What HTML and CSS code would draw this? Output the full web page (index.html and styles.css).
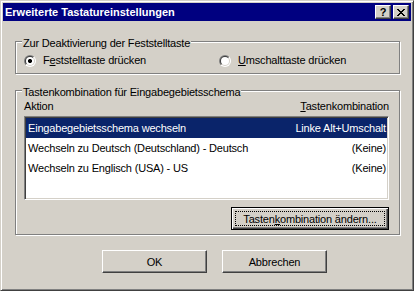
FILE: index.html
```html
<!DOCTYPE html>
<html lang="de">
<head>
    <meta charset="UTF-8">
    <meta name="viewport" content="width=device-width, initial-scale=1.0">
    <title>Erweiterte Tastatureinstellungen</title>
    <link rel="stylesheet" href="styles.css">
</head>
<body>
    <div class="window">
        <div class="titlebar">
            <span class="title">Erweiterte Tastatureinstellungen</span>
            <div class="caption-buttons">
                <button class="cap-btn help">?</button>
                <button class="cap-btn close">
                    <svg width="8" height="7" viewBox="0 0 8 7" shape-rendering="crispEdges">
                        <path fill="#000" d="M0 0h2v1H0z M6 0h2v1H6z M1 1h2v1H1z M5 1h2v1H5z M2 2h4v1H2z M3 3h2v1H3z M2 4h4v1H2z M1 5h2v1H1z M5 5h2v1H5z M0 6h2v1H0z M6 6h2v1H6z"/>
                    </svg>
                </button>
            </div>
        </div>

        <div class="dialog-body">
            <div class="group group-caps">
                <div class="group-title">Zur Deaktivierung der Feststelltaste</div>
                <div class="radio-row">
                    <label class="radio first">
                        <span class="radio-outer"><span class="radio-inner"><span class="radio-well checked"></span></span></span>
                        <span>F<u>e</u>ststelltaste drücken</span>
                    </label>
                    <label class="radio">
                        <span class="radio-outer"><span class="radio-inner"><span class="radio-well"></span></span></span>
                        <span><u>U</u>mschalttaste drücken</span>
                    </label>
                </div>
            </div>

            <div class="group group-keys">
                <div class="group-title">Tastenkombination für Eingabegebietsschema</div>
                <div class="list-header">
                    <span>Aktion</span>
                    <span><u>T</u>astenkombination</span>
                </div>
                <div class="listbox">
                    <div class="list-row selected">
                        <span>Eingabegebietsschema wechseln</span>
                        <span>Linke Alt+Umschalt</span>
                    </div>
                    <div class="list-row">
                        <span>Wechseln zu Deutsch (Deutschland) - Deutsch</span>
                        <span>(Keine)</span>
                    </div>
                    <div class="list-row">
                        <span>Wechseln zu Englisch (USA) - US</span>
                        <span>(Keine)</span>
                    </div>
                </div>
                <div class="group-actions">
                    <button class="btn btn-default">Tasten<u>k</u>ombination ändern...</button>
                </div>
            </div>

            <div class="dialog-buttons">
                <button class="btn">OK</button>
                <button class="btn">Abbrechen</button>
            </div>
        </div>
    </div>
</body>
</html>
```

FILE: styles.css
```css
*{
    box-sizing: border-box;
}
body{
    margin: 0;
    padding: 0;
    background: #d4d0c8;
    font-family: "Liberation Sans", Arial, sans-serif;
    font-size: 11px;
    line-height: 13px;
    letter-spacing: -0.18px;
    color: #000;
}
u{
    text-decoration: underline;
    text-underline-offset: 1px;
}

.window{
    width: 414px;
    height: 291px;
    background: #d4d0c8;
    border: 1px solid;
    border-color: #d4d0c8 #404040 #404040 #d4d0c8;
    box-shadow: inset 1px 1px #fff, inset -1px -1px #808080;
    padding: 2px;
}

.titlebar{
    display: flex;
    align-items: center;
    height: 18px;
    background: #000080;
    padding: 0 2px;
}
.title{
    color: #fff;
    font-weight: bold;
    letter-spacing: 0;
}
.caption-buttons{
    display: flex;
    gap: 2px;
    margin-left: auto;
}
.cap-btn{
    width: 16px;
    height: 14px;
    padding: 0;
    background: #d4d0c8;
    border: 1px solid;
    border-color: #fff #404040 #404040 #fff;
    box-shadow: inset -1px -1px #808080;
    display: flex;
    align-items: center;
    justify-content: center;
    font-family: "Liberation Sans", Arial, sans-serif;
    font-weight: bold;
    font-size: 11px;
    line-height: 12px;
}
.cap-btn svg{
    display: block;
}

.dialog-body{
    padding: 20px 11px 0 12px;
}

.group{
    border: 1px solid #808080;
    box-shadow: inset 1px 1px #fff, 1px 1px #fff;
    padding: 0 10px 0 8px;
}
.group-title{
    display: table;
    background: #d4d0c8;
    margin: -5px 0 0 -2px;
    padding: 0 1px;
}
.group-caps{
    padding-bottom: 6px;
}
.group-keys{
    margin-top: 16px;
    padding-bottom: 4px;
}

.radio-row{
    display: flex;
    margin-top: 4px;
}
.radio{
    display: flex;
    align-items: center;
    gap: 7px;
}
.radio.first{
    width: 195px;
}
.radio-outer{
    width: 12px;
    height: 12px;
    border-radius: 50%;
    padding: 1px;
    background: linear-gradient(135deg, #808080 50%, #fff 50%);
}
.radio-inner{
    display: block;
    width: 10px;
    height: 10px;
    border-radius: 50%;
    padding: 1px;
    background: linear-gradient(135deg, #404040 50%, #d4d0c8 50%);
}
.radio-well{
    display: block;
    width: 8px;
    height: 8px;
    border-radius: 50%;
    background: #fff;
}
.radio-well.checked{
    background: radial-gradient(circle, #000 1.8px, #fff 2.3px);
}

.list-header{
    display: flex;
    justify-content: space-between;
    margin-top: 1px;
}
.listbox{
    margin-top: 3px;
    height: 84px;
    background: #fff;
    border: 1px solid;
    border-color: #808080 #fff #fff #808080;
    box-shadow: inset 1px 1px #404040, inset -1px -1px #d4d0c8;
    padding: 1px;
}
.list-row{
    display: flex;
    justify-content: space-between;
    height: 20px;
    line-height: 20px;
    padding: 0 1px 0 2px;
}
.list-row.selected{
    background: #0a246a;
    color: #fff;
}

.group-actions{
    display: flex;
    justify-content: flex-end;
    margin-top: 7px;
}

.btn{
    height: 23px;
    width: 105px;
    padding: 0;
    background: #d4d0c8;
    font-family: "Liberation Sans", Arial, sans-serif;
    font-size: 11px;
    letter-spacing: -0.18px;
    color: #000;
    border: 1px solid;
    border-color: #fff #404040 #404040 #fff;
    box-shadow: inset -1px -1px #808080;
}
.btn-default{
    width: 158px;
    border: 1px solid #000;
    box-shadow: inset 1px 1px #fff, inset -1px -1px #404040, inset -2px -2px #808080;
    outline: 1px dotted #000;
    outline-offset: -5px;
}

.dialog-buttons{
    display: flex;
    gap: 15px;
    margin: 15px 0 0 87px;
}
```
